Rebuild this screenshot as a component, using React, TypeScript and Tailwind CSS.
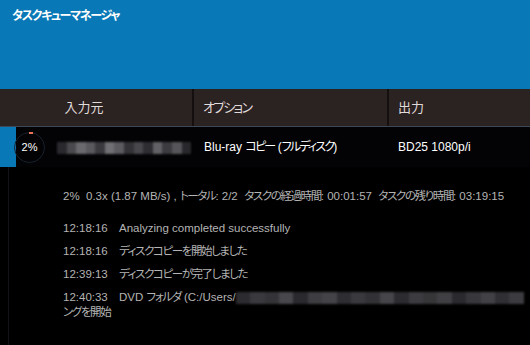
const font = { fontFamily: '"Liberation Sans", "Noto Sans CJK JP", sans-serif' };

const blurA = ['#2a2a2e', '#4a4a4e', '#6a6a6e', '#5a5a5e', '#3a3a3e', '#707074', '#5c5c60', '#333337', '#48484c', '#2e2e32', '#626266', '#3c3c40', '#56565a', '#28282c'];
const blurB = ['#2c2c30', '#3a3a3e', '#343438', '#48484c', '#2a2a2e', '#3e3e42', '#444448', '#2e2e32', '#3a3a3e', '#323236', '#46464a', '#2c2c30', '#3c3c40', '#363639', '#404044', '#2a2a2e', '#38383c', '#424246', '#303034', '#3c3c40'];

function Blur({ colors, w, h }: { colors: string[]; w: number; h: number }) {
  return (
    <span className="inline-flex align-middle blur-[1px]" style={{ width: w, height: h }}>
      {colors.map((c, i) => (
        <span key={i} className="flex-1" style={{ backgroundColor: c }} />
      ))}
    </span>
  );
}

// narrow japanese runs a bit, the reference font is tighter than Noto
function J({ children }: { children: React.ReactNode }) {
  return <span className="tracking-[-1.4px]">{children}</span>;
}

const logs: [string, React.ReactNode][] = [
  ['12:18:16', 'Analyzing completed successfully'],
  ['12:18:16', <J>ディスクコピーを開始しました</J>],
  ['12:39:13', <J>ディスクコピーが完了しました</J>],
];

export default function App() {
  return (
    <div className="w-[530px] h-[345px] bg-black overflow-hidden flex flex-col [font-feature-settings:'palt']" style={font}>
      <div className="h-[89px] bg-[#0878b6] px-3 pt-[9px]">
        <div className="text-white text-[12px] font-bold leading-[14px] tracking-[-1.3px]">タスクキューマネージャ</div>
      </div>

      <div className="h-[38px] bg-[#2b2222] flex text-[13px] text-[#e0dcdc] border-b border-[#3b4a58]">
        <div className="w-[194px] flex items-center justify-center pr-6 border-r-2 border-[#150f0f]">入力元</div>
        <div className="w-[195px] flex items-center pl-[9px] border-r-2 border-[#150f0f] tracking-[-1.8px]">オプション</div>
        <div className="flex-1 flex items-center pl-[9px]">出力</div>
      </div>

      <div className="h-[40px] flex items-center bg-[#030205] text-[12px] text-white">
        <div className="w-[16px] h-full bg-[#0878b6]" />
        <div className="relative w-[31px] h-[31px] ml-[-2px] rounded-full border border-[#17222c] flex items-center justify-center text-[11px]">
          2%
          <span className="absolute top-[-1px] left-[14px] w-[4px] h-[2px] bg-[#e8735a]" />
        </div>
        <div className="w-[148px] pl-[12px]">
          <Blur colors={blurA} w={134} h={12} />
        </div>
        <div className="w-[195px] pl-[11px] whitespace-pre">
          Blu-ray <span className="tracking-[-1.8px]">コピー</span> (<span className="tracking-[-1.8px]">フルディスク</span>)
        </div>
        <div className="flex-1 pl-[10px]">BD25 1080p/i</div>
      </div>

      <div className="flex-1 ml-[8px] border-l border-[#141018] pl-[54px] pt-[22px] text-[11.5px] text-[#b4b4b4] leading-[14px]">
        <div className="whitespace-pre">
          2%  0.3x (1.87 MB/s) , <J>トータル</J>: 2/2  <J>タスクの経過時間</J>: 00:01:57  <J>タスクの残り時間</J>: 03:19:15
        </div>
        <div className="mt-[18px] flex flex-col gap-[9px]">
          {logs.map(([t, m], i) => (
            <div key={i} className="flex">
              <span className="w-[56px]">{t}</span>
              <span>{m}</span>
            </div>
          ))}
          <div className="leading-[15px]">
            <span className="inline-block w-[56px]">12:40:33</span>
            DVD <J>フォルダ</J> (C:/Users/
            <Blur colors={blurB} w={288} h={12} />
            <span className="whitespace-nowrap"><J>ングを開始</J></span>
          </div>
        </div>
      </div>
    </div>
  );
}
